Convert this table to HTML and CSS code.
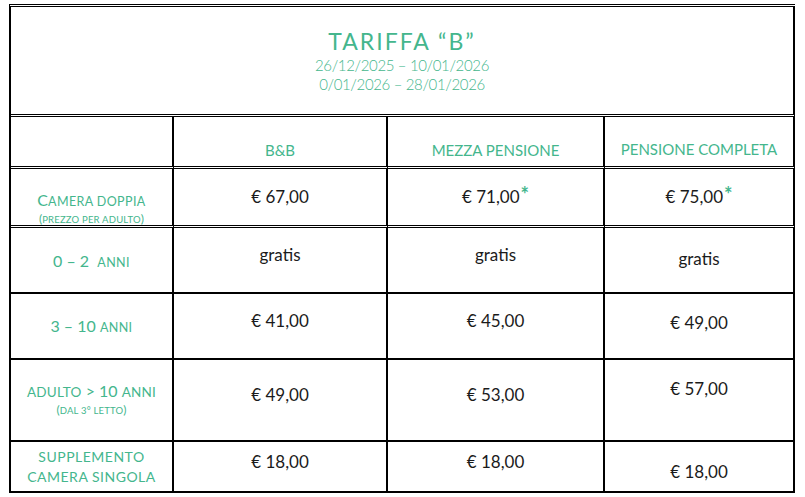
FILE: index.html
```html
<!DOCTYPE html>
<html lang="it">
<head>
<meta charset="utf-8">
<title>Tariffa B</title>
<link rel="stylesheet" href="styles.css">
</head>
<body>
<div class="tariff">
  <div class="row dbl">
    <div class="c title-cell">
      <div class="title">TARIFFA “B”</div>
      <div class="dates">26/12/2025 – 10/01/2026</div>
      <div class="dates">0/01/2026 – 28/01/2026</div>
    </div>
  </div>
  <div class="row dbl">
    <div class="c head"></div>
    <div class="c head">B&amp;B</div>
    <div class="c head">MEZZA PENSIONE</div>
    <div class="c head head-last">PENSIONE COMPLETA</div>
  </div>
  <div class="row dbl">
    <div class="c label label-low">
      <span><span class="big">C</span><span class="smc">AMERA DOPPIA</span></span>
      <span class="note">(<span class="note-t">PREZZO PER ADULTO</span>)</span>
    </div>
    <div class="c val"><span>€ 67,00</span></div>
    <div class="c val"><span>€ 71,00<span class="star">*</span></span></div>
    <div class="c val"><span>€ 75,00<span class="star">*</span></span></div>
  </div>
  <div class="row">
    <div class="c label label-r2"><span><span class="big">0 – 2</span>&nbsp; <span class="smc">ANNI</span></span></div>
    <div class="c val up11"><span>gratis</span></div>
    <div class="c val up11"><span>gratis</span></div>
    <div class="c val up3"><span>gratis</span></div>
  </div>
  <div class="row">
    <div class="c label"><span><span class="big">3 – 10</span> <span class="smc">ANNI</span></span></div>
    <div class="c val up10"><span>€ 41,00</span></div>
    <div class="c val up10"><span>€ 45,00</span></div>
    <div class="c val up6"><span>€ 49,00</span></div>
  </div>
  <div class="row">
    <div class="c label">
      <span><span class="smc smc-lg">ADULTO</span> <span class="big">&gt; 10</span> <span class="smc smc-lg">ANNI</span></span>
      <span class="note">(<span class="note-t">DAL 3° LETTO</span>)</span>
    </div>
    <div class="c val up10"><span>€ 49,00</span></div>
    <div class="c val up10"><span>€ 53,00</span></div>
    <div class="c val up22"><span>€ 57,00</span></div>
  </div>
  <div class="row">
    <div class="c label caps"><span>SUPPLEMENTO</span><span>CAMERA SINGOLA</span></div>
    <div class="c val up10"><span>€ 18,00</span></div>
    <div class="c val up10"><span>€ 18,00</span></div>
    <div class="c val down10"><span>€ 18,00</span></div>
  </div>
</div>
</body>
</html>
```

FILE: styles.css
```css
html, body {
  margin: 0;
  padding: 0;
  background: #ffffff;
}

body {
  font-family: "Lato", "Noto Sans", sans-serif;
  color: #1b1b1b;
}

.tariff {
  display: grid;
  grid-template-columns: 163px 214px 217px 190px;
  grid-template-rows: 110px 52px 59px 66px 66px 82px 51px;
  width: max-content;
  margin: 4px 0 0 9px;
  border-top: 3px double #000;
  border-left: 2px solid #000;
}

.row {
  display: contents;
}

.c {
  box-sizing: border-box;
  border-right: 2px solid #000;
  border-bottom: 2px solid #000;
  display: flex;
  flex-direction: column;
  align-items: center;
  justify-content: center;
  text-align: center;
}

.dbl > .c {
  border-bottom: 3px double #000;
}

.title-cell {
  grid-column: 1 / span 4;
  color: #44b68d;
}

.title {
  font-size: 23px;
  letter-spacing: 2px;
  line-height: 28px;
  margin-bottom: 1px;
}

.dates {
  font-size: 15px;
  line-height: 19px;
  font-weight: 300;
  letter-spacing: -0.35px;
}

.head {
  color: #44b68d;
  font-size: 15px;
  padding-top: 16px;
}

.head-last {
  padding-top: 14px;
}

.label {
  color: #44b68d;
  font-size: 16px;
  line-height: 19px;
}

.big {
  font-size: 16px;
}

.smc {
  font-size: 12.5px;
  letter-spacing: 0.4px;
}

.smc-lg {
  font-size: 13.5px;
  letter-spacing: 0.2px;
}

.label-low {
  padding-top: 23px;
}

.label-r2 {
  padding-top: 3px;
}

.note {
  font-size: 12px;
  line-height: 16px;
}

.note-t {
  font-size: 9.5px;
  letter-spacing: 0.2px;
}

.caps {
  font-size: 14px;
  line-height: 20px;
  letter-spacing: 0.5px;
}

.val {
  font-size: 17px;
  line-height: 20px;
}

.star {
  color: #44b68d;
  font-size: 20px;
  font-weight: 700;
  line-height: 0;
  vertical-align: 1px;
  margin-left: 1px;
}

.up3 { padding-bottom: 3px; }
.up6 { padding-bottom: 6px; }
.up10 { padding-bottom: 10px; }
.up11 { padding-bottom: 11px; }
.up22 { padding-bottom: 22px; }
.down10 { padding-top: 10px; }
```
